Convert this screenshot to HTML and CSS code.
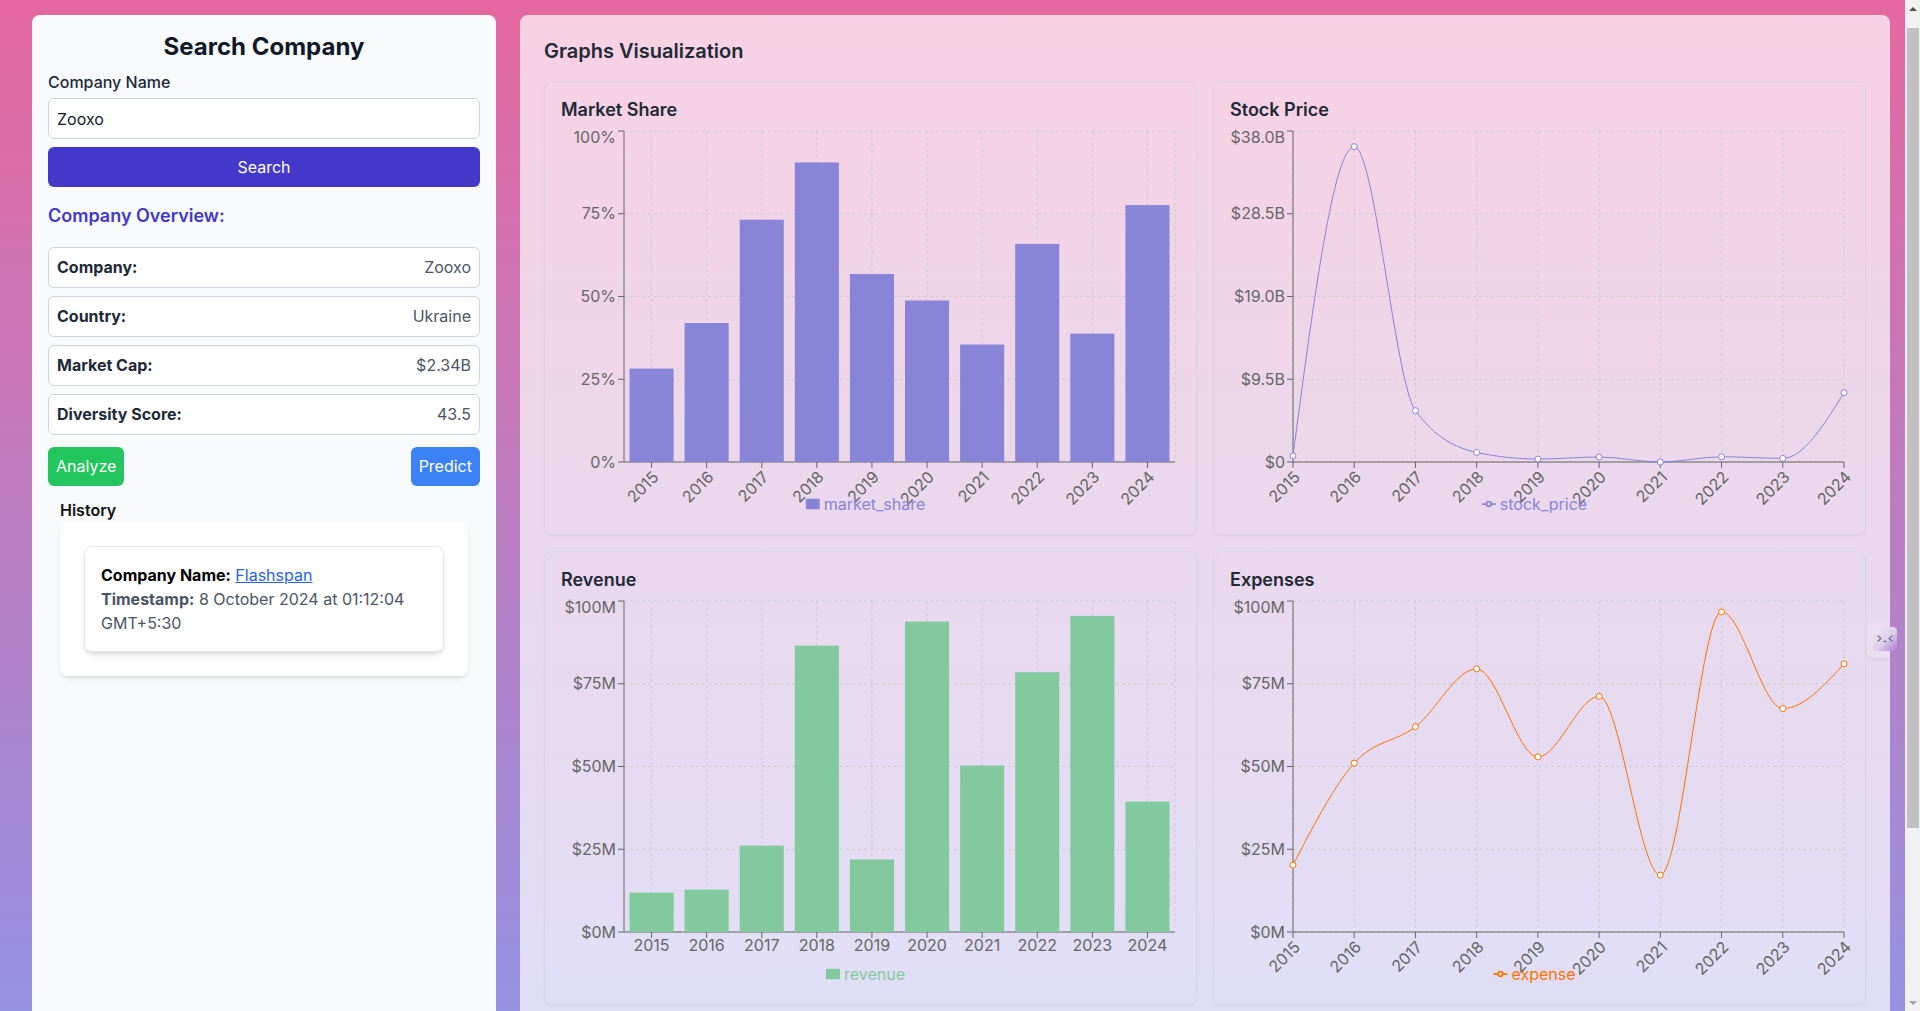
FILE: index.html
```html
<!DOCTYPE html>
<html lang="en">
<head>
<meta charset="utf-8">
<title>Company Dashboard</title>
<link rel="stylesheet" href="styles.css">
</head>
<body>
<div class="viewport">
<div class="app">
  <aside class="sidebar">
    <h1 class="sidebar-title">Search Company</h1>
    <label class="field-label" for="company">Company Name</label>
    <input id="company" class="text-input" type="text" value="Zooxo">
    <button class="btn btn-search">Search</button>
    <h2 class="overview-title">Company Overview:</h2>
    <div class="info-list">
      <div class="info-row"><span class="info-label">Company:</span><span class="info-value">Zooxo</span></div>
      <div class="info-row"><span class="info-label">Country:</span><span class="info-value">Ukraine</span></div>
      <div class="info-row"><span class="info-label">Market Cap:</span><span class="info-value">$2.34B</span></div>
      <div class="info-row"><span class="info-label">Diversity Score:</span><span class="info-value">43.5</span></div>
    </div>
    <div class="actions">
      <button class="btn btn-analyze">Analyze</button>
      <button class="btn btn-predict">Predict</button>
    </div>
    <section class="history">
      <h3 class="history-title">History</h3>
      <div class="history-box">
        <div class="history-card">
          <p class="history-line"><strong>Company Name:</strong> <a href="#">Flashspan</a></p>
          <p class="history-line muted"><strong>Timestamp:</strong> 8 October 2024 at 01:12:04 GMT+5:30</p>
        </div>
      </div>
    </section>
  </aside>

  <main class="graphs">
    <h2 class="graphs-title">Graphs Visualization</h2>
    <div class="chart-grid">
      <div class="chart-card">
        <h3 class="chart-title">Market Share</h3>
        <svg class="chart" id="chart-market" width="619" height="392"></svg>
      </div>
      <div class="chart-card">
        <h3 class="chart-title">Stock Price</h3>
        <svg class="chart" id="chart-stock" width="619" height="392"></svg>
      </div>
      <div class="chart-card">
        <h3 class="chart-title">Revenue</h3>
        <svg class="chart" id="chart-revenue" width="619" height="392"></svg>
      </div>
      <div class="chart-card">
        <h3 class="chart-title">Expenses</h3>
        <svg class="chart" id="chart-expense" width="619" height="392"></svg>
      </div>
    </div>
  </main>
</div>
</div>

<div class="scrollbar" aria-hidden="true">
  <div class="sb-btn"><span class="sb-arrow-up"></span></div>
  <div class="sb-track"><div class="sb-thumb"></div></div>
  <div class="sb-btn"><span class="sb-arrow-down"></span></div>
</div>

<div class="float-tab">
  <div class="float-btn">
    <svg width="24" height="24" viewBox="0 0 24 24" fill="none" stroke="#7a7488" stroke-width="1.4" stroke-linecap="round" stroke-linejoin="round">
      <path d="M5 9l3 2.5-3 2.5"/>
      <path d="M19 9l-3 2.5 3 2.5"/>
      <path d="M11 14.5h2"/>
    </svg>
  </div>
</div>

<script src="script.js"></script>
</body>
</html>
```

FILE: styles.css
```css
* { box-sizing: border-box; }

html, body {
  margin: 0;
  padding: 0;
  height: 100%;
  overflow: hidden;
}

body {
  display: flex;
  font-family: Inter, "Noto Sans", "Liberation Sans", sans-serif;
  font-size: 16px;
  line-height: 24px;
  color: #000;
}

.viewport {
  flex: 1;
  min-width: 0;
  height: 100vh;
  overflow: hidden;
}

/* classic scrollbar strip */
.scrollbar {
  flex: none;
  display: flex;
  flex-direction: column;
  width: 15px;
  height: 100vh;
  background: #f1f1f1;
}

.sb-btn {
  flex: none;
  display: flex;
  align-items: center;
  justify-content: center;
  height: 17px;
}

.sb-arrow-up {
  width: 0;
  height: 0;
  border-left: 4px solid transparent;
  border-right: 4px solid transparent;
  border-bottom: 4px solid #505050;
}

.sb-arrow-down {
  width: 0;
  height: 0;
  border-left: 4px solid transparent;
  border-right: 4px solid transparent;
  border-top: 4px solid #a3a3a3;
}

.sb-track {
  flex: 1;
  padding: 11px 1px 0 2px;
}

.sb-thumb {
  height: 800px;
  background: #c1c1c1;
}

.app {
  display: flex;
  align-items: stretch;
  gap: 24px;
  min-height: 1234px;
  padding: 15px 15px 15px 32px;
  background: linear-gradient(180deg, #e5679f 0%, #849cf1 100%);
}

/* ---------- sidebar ---------- */
.sidebar {
  flex: none;
  width: 464px;
  padding: 16px;
  background: #f8fafc;
  border-radius: 8px;
}

.sidebar-title {
  margin: 0 0 7px;
  font-size: 24px;
  line-height: 32px;
  font-weight: 700;
  text-align: center;
  color: #111827;
}

.field-label {
  display: block;
  margin-bottom: 4px;
  font-size: 16px;
  line-height: 24px;
  font-weight: 500;
  color: #1f2937;
}

.text-input {
  display: block;
  width: 100%;
  height: 41px;
  padding: 8px;
  border: 1px solid #d1d5db;
  border-radius: 6px;
  background: #fff;
  font-family: inherit;
  font-size: 16px;
  line-height: 23px;
  color: #111827;
}

.btn {
  border: 0;
  border-radius: 6px;
  padding: 8px;
  font-family: inherit;
  font-size: 16px;
  line-height: 23px;
  color: #fff;
  cursor: pointer;
}

.btn-search {
  display: block;
  width: 100%;
  height: 40px;
  margin-top: 8px;
  background: #4338ca;
}

.overview-title {
  margin: 15px 0 17px;
  font-size: 18px;
  line-height: 28px;
  font-weight: 600;
  color: #4338ca;
}

.info-list {
  display: flex;
  flex-direction: column;
  gap: 8px;
}

.info-row {
  display: flex;
  justify-content: space-between;
  padding: 8px;
  line-height: 23px;
  background: #fff;
  border: 1px solid #d1d5db;
  border-radius: 6px;
}

.info-label {
  font-weight: 700;
  color: #1f2937;
}

.info-value {
  color: #4b5563;
}

.actions {
  display: flex;
  justify-content: space-between;
  margin-top: 12px;
}

.btn-analyze {
  background: #22c55e;
}

.btn-predict {
  background: #3b82f6;
}

.history {
  padding: 12px;
}

.history-title {
  margin: 0;
  font-size: 16px;
  line-height: 24px;
  font-weight: 600;
  color: #111;
}

.history-box {
  padding: 24px;
  background: #fff;
  border-radius: 8px;
  box-shadow: 0 4px 6px -1px rgba(0, 0, 0, 0.08), 0 2px 4px -2px rgba(0, 0, 0, 0.08);
}

.history-card {
  padding: 16px;
  background: #fff;
  border: 1px solid #e5e7eb;
  border-radius: 8px;
  box-shadow: 0 4px 6px -1px rgba(0, 0, 0, 0.1), 0 2px 4px -2px rgba(0, 0, 0, 0.1);
}

.history-line {
  margin: 0;
}

.history-line strong {
  font-weight: 700;
}

.history-line a {
  color: #2563eb;
  text-decoration: underline;
}

.muted {
  color: #4b5563;
}

/* ---------- graphs ---------- */
.graphs {
  flex: 1;
  min-width: 0;
  padding: 22px 24px 24px;
  background: rgba(255, 255, 255, 0.7);
  border-radius: 8px;
}

.graphs-title {
  margin: 0 0 16px;
  font-size: 20px;
  line-height: 28px;
  font-weight: 600;
  color: #1f2937;
}

.chart-grid {
  display: grid;
  grid-template-columns: 1fr 1fr;
  gap: 16px;
}

.chart-card {
  min-width: 0;
  padding: 16px;
  border: 1px solid rgba(209, 213, 219, 0.7);
  border-radius: 8px;
  box-shadow: 0 1px 2px rgba(0, 0, 0, 0.05);
}

.chart-title {
  margin: 0 0 4px;
  font-size: 18px;
  line-height: 24px;
  font-weight: 600;
  color: #1f2937;
}

.chart {
  display: block;
  width: 619px;
  height: 392px;
  overflow: visible;
  font-family: Inter, "Noto Sans", sans-serif;
  font-size: 16px;
}

.chart .grid line {
  stroke: #ccc;
  stroke-dasharray: 3 3;
  fill: none;
}

.chart .axis line {
  stroke: #666;
}

.chart .tick-label {
  fill: #666;
}

/* ---------- floating tab ---------- */
.float-tab {
  position: absolute;
  left: 1866px;
  top: 620px;
  width: 24px;
  height: 38px;
  background: rgba(255, 255, 255, 0.12);
  border-radius: 8px 0 0 8px;
  box-shadow: 0 2px 3px rgba(0, 0, 0, 0.05);
}

.float-btn {
  position: absolute;
  left: 7px;
  top: 7px;
  width: 24px;
  height: 24px;
  border-radius: 4px;
  background: linear-gradient(135deg, #efe7f3 0%, #ddd0ea 55%, #a878d2 100%);
}

.float-btn svg {
  display: block;
}
```

FILE: script.js
```js
(function () {
  var NS = 'http://www.w3.org/2000/svg';
  var W = 619, H = 392, L = 63, R = 614, T = 5, B = 336;
  var YEARS = [2015, 2016, 2017, 2018, 2019, 2020, 2021, 2022, 2023, 2024];

  function mk(tag, attrs, parent, text) {
    var e = document.createElementNS(NS, tag);
    for (var k in attrs) e.setAttribute(k, attrs[k]);
    if (text != null) e.textContent = text;
    if (parent) parent.appendChild(e);
    return e;
  }

  function sign(x) { return x < 0 ? -1 : 1; }
  function slope3(x0, y0, x1, y1, x2, y2) {
    var h0 = x1 - x0, h1 = x2 - x1;
    var s0 = (y1 - y0) / h0, s1 = (y2 - y1) / h1;
    var p = (s0 * h1 + s1 * h0) / (h0 + h1);
    return (sign(s0) + sign(s1)) * Math.min(Math.abs(s0), Math.abs(s1), 0.5 * Math.abs(p)) || 0;
  }
  function slope2(x0, y0, x1, y1, t) {
    var h = x1 - x0;
    return h ? (3 * (y1 - y0) / h - t) / 2 : t;
  }
  function monotone(pts) {
    var n = pts.length, t = new Array(n), i;
    for (i = 1; i < n - 1; i++) {
      t[i] = slope3(pts[i - 1][0], pts[i - 1][1], pts[i][0], pts[i][1], pts[i + 1][0], pts[i + 1][1]);
    }
    t[0] = slope2(pts[0][0], pts[0][1], pts[1][0], pts[1][1], t[1]);
    t[n - 1] = slope2(pts[n - 2][0], pts[n - 2][1], pts[n - 1][0], pts[n - 1][1], t[n - 2]);
    var d = 'M' + pts[0][0] + ',' + pts[0][1];
    for (i = 0; i < n - 1; i++) {
      var x0 = pts[i][0], y0 = pts[i][1], x1 = pts[i + 1][0], y1 = pts[i + 1][1];
      var dx = (x1 - x0) / 3;
      d += 'C' + (x0 + dx) + ',' + (y0 + dx * t[i]) + ',' + (x1 - dx) + ',' + (y1 - dx * t[i + 1]) + ',' + x1 + ',' + y1;
    }
    return d;
  }

  function draw(id, cfg) {
    var svg = document.getElementById(id);
    svg.setAttribute('viewBox', '0 0 ' + W + ' ' + H);
    var n = cfg.values.length;
    var band = (R - L) / n;
    function ys(v) { return B - (v / cfg.max) * (B - T); }
    function xs(i) { return cfg.type === 'bar' ? L + band * (i + 0.5) : L + i * (R - L) / (n - 1); }

    // grid
    var grid = mk('g', { 'class': 'grid' }, svg);
    cfg.ticks.forEach(function (tk) {
      var y = ys(tk);
      mk('line', { x1: L, x2: R, y1: y, y2: y }, grid);
    });
    for (var i = 0; i < n; i++) {
      var gx = xs(i);
      mk('line', { x1: gx, x2: gx, y1: T, y2: B }, grid);
    }
    if (cfg.type === 'bar') mk('line', { x1: R, x2: R, y1: T, y2: B }, grid);

    // axes
    var axis = mk('g', { 'class': 'axis' }, svg);
    mk('line', { x1: L, x2: R, y1: B, y2: B }, axis);
    mk('line', { x1: L, x2: L, y1: T, y2: B }, axis);
    for (i = 0; i < n; i++) {
      var tx = xs(i);
      mk('line', { x1: tx, x2: tx, y1: B, y2: B + 6 }, axis);
      var ly = B + 8;
      if (cfg.rotate) {
        mk('text', { 'class': 'tick-label', x: tx, y: ly, dy: '0.71em', 'text-anchor': 'end',
          transform: 'rotate(-45 ' + tx + ' ' + ly + ')' }, axis, String(YEARS[i]));
      } else {
        mk('text', { 'class': 'tick-label', x: tx, y: ly, dy: '0.71em', 'text-anchor': 'middle' }, axis, String(YEARS[i]));
      }
    }
    cfg.ticks.forEach(function (tk, j) {
      var y = ys(tk);
      mk('line', { x1: L - 6, x2: L, y1: y, y2: y }, axis);
      var off = (tk === cfg.max) ? 6.6 : 0;
      mk('text', { 'class': 'tick-label', x: L - 8, y: y + off, dy: '0.355em', 'text-anchor': 'end' }, axis, cfg.fmt[j]);
    });

    // data
    if (cfg.type === 'bar') {
      cfg.values.forEach(function (v, k) {
        var y = ys(v);
        mk('rect', { x: L + band * k + band * 0.1, y: y, width: band * 0.8, height: B - y, fill: cfg.color }, svg);
      });
    } else {
      var pts = cfg.values.map(function (v, k) { return [xs(k), ys(v)]; });
      mk('path', { d: monotone(pts), fill: 'none', stroke: cfg.color, 'stroke-width': 1 }, svg);
      pts.forEach(function (p) {
        mk('circle', { cx: p[0], cy: p[1], r: 3, fill: '#fff', stroke: cfg.color, 'stroke-width': 1 }, svg);
      });
    }

    // legend
    var lg = mk('g', {}, svg);
    var cy = 378;
    var txt = mk('text', { x: 0, y: cy, dy: '0.355em', fill: cfg.color }, lg, cfg.name);
    var tw = txt.getComputedTextLength();
    var itemW = 14 + 4 + tw;
    var left = 5 + (W - 10 - (itemW + 10)) / 2;
    txt.setAttribute('x', left + 18);
    var s = 14 / 32;
    if (cfg.type === 'bar') {
      mk('path', { d: 'M0,4h32v24h-32z', fill: cfg.color,
        transform: 'translate(' + left + ',' + (cy - 7) + ') scale(' + s + ')' }, lg);
    } else {
      var third = 32 / 3, sixth = 32 / 6;
      var d = 'M0,16h' + third + 'A' + sixth + ',' + sixth + ',0,1,1,' + (2 * third) + ',16H32M' + (2 * third) +
        ',16A' + sixth + ',' + sixth + ',0,1,1,' + third + ',16';
      mk('path', { d: d, fill: 'none', stroke: cfg.color, 'stroke-width': 4,
        transform: 'translate(' + left + ',' + (cy - 7) + ') scale(' + s + ')' }, lg);
    }
  }

  draw('chart-market', {
    type: 'bar', color: '#8884d8', name: 'market_share', rotate: true, max: 100,
    ticks: [0, 25, 50, 75, 100], fmt: ['0%', '25%', '50%', '75%', '100%'],
    values: [28.2, 42.0, 73.2, 90.5, 56.8, 48.8, 35.5, 65.9, 38.8, 77.6]
  });
  draw('chart-stock', {
    type: 'line', color: '#8884d8', name: 'stock_price', rotate: true, max: 38,
    ticks: [0, 9.5, 19, 28.5, 38], fmt: ['$0', '$9.5B', '$19.0B', '$28.5B', '$38.0B'],
    values: [0.7, 36.2, 5.9, 1.1, 0.34, 0.57, 0.0, 0.6, 0.42, 7.96]
  });
  draw('chart-revenue', {
    type: 'bar', color: '#82ca9d', name: 'revenue', rotate: false, max: 100,
    ticks: [0, 25, 50, 75, 100], fmt: ['$0M', '$25M', '$50M', '$75M', '$100M'],
    values: [11.9, 12.8, 26.1, 86.5, 21.9, 93.8, 50.3, 78.5, 95.5, 39.4]
  });
  draw('chart-expense', {
    type: 'line', color: '#ff7300', name: 'expense', rotate: true, max: 100,
    ticks: [0, 25, 50, 75, 100], fmt: ['$0M', '$25M', '$50M', '$75M', '$100M'],
    values: [20.2, 51.0, 62.0, 79.5, 52.9, 71.2, 17.2, 96.7, 67.5, 81.0]
  });
})();
```
